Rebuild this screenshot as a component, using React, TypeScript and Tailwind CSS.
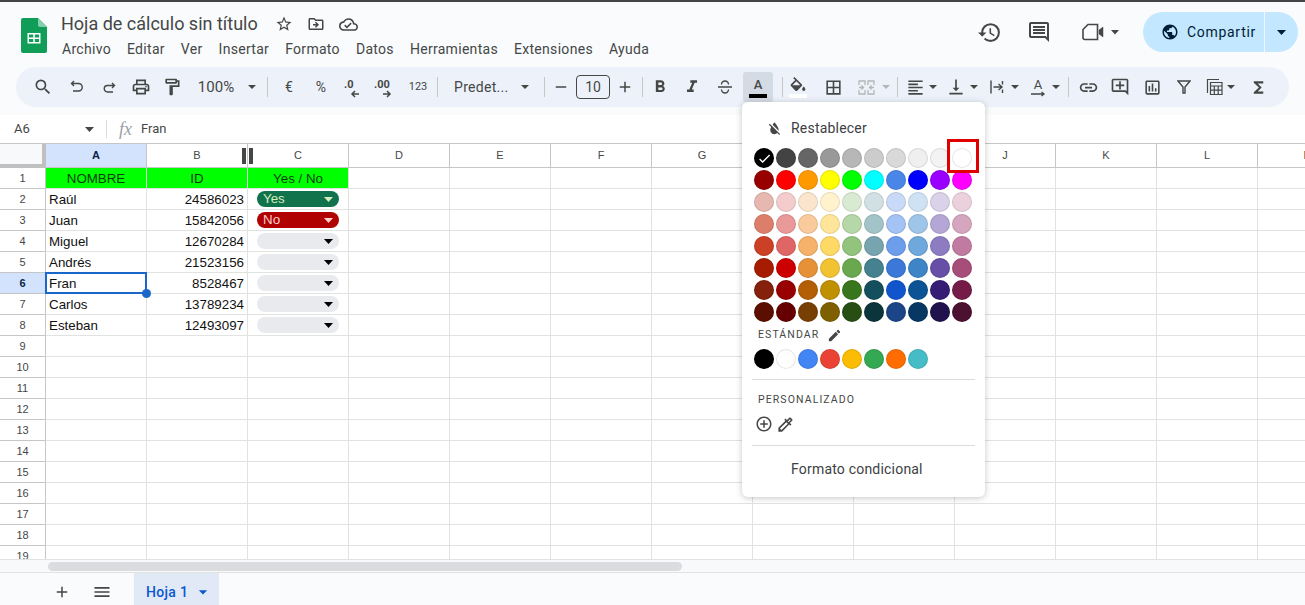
import React from "react";
import {
  MdSearch, MdOutlinePrint, MdOutlineFormatPaint, MdArrowDropDown, MdRemove, MdAdd,
  MdFormatBold, MdFormatItalic, MdBorderAll, MdFormatAlignLeft,
  MdVerticalAlignBottom, MdLink, MdOutlineAddComment, MdOutlineInsertChart, MdFunctions, MdHistory,
  MdOutlineComment, MdPublic, MdStarBorder, MdOutlineDriveFileMove, MdOutlineCloudDone, MdCheck,
  MdFormatColorReset, MdEdit, MdAddCircleOutline, MdOutlineColorize, MdMenu,
} from "react-icons/md";

const palette = [
  ["bg-[#000000]","bg-[#434343]","bg-[#666666]","bg-[#999999]","bg-[#b7b7b7]","bg-[#cccccc]","bg-[#d9d9d9]","bg-[#efefef]","bg-[#f3f3f3]","bg-[#ffffff]"],
  ["bg-[#980000]","bg-[#ff0000]","bg-[#ff9900]","bg-[#ffff00]","bg-[#00ff00]","bg-[#00ffff]","bg-[#4a86e8]","bg-[#0000ff]","bg-[#9900ff]","bg-[#ff00ff]"],
  ["bg-[#e6b8af]","bg-[#f4cccc]","bg-[#fce5cd]","bg-[#fff2cc]","bg-[#d9ead3]","bg-[#d0e0e3]","bg-[#c9daf8]","bg-[#cfe2f3]","bg-[#d9d2e9]","bg-[#ead1dc]"],
  ["bg-[#dd7e6b]","bg-[#ea9999]","bg-[#f9cb9c]","bg-[#ffe599]","bg-[#b6d7a8]","bg-[#a2c4c9]","bg-[#a4c2f4]","bg-[#9fc5e8]","bg-[#b4a7d6]","bg-[#d5a6bd]"],
  ["bg-[#cc4125]","bg-[#e06666]","bg-[#f6b26b]","bg-[#ffd966]","bg-[#93c47d]","bg-[#76a5af]","bg-[#6d9eeb]","bg-[#6fa8dc]","bg-[#8e7cc3]","bg-[#c27ba0]"],
  ["bg-[#a61c00]","bg-[#cc0000]","bg-[#e69138]","bg-[#f1c232]","bg-[#6aa84f]","bg-[#45818e]","bg-[#3c78d8]","bg-[#3d85c6]","bg-[#674ea7]","bg-[#a64d79]"],
  ["bg-[#85200c]","bg-[#990000]","bg-[#b45f06]","bg-[#bf9000]","bg-[#38761d]","bg-[#134f5c]","bg-[#1155cc]","bg-[#0b5394]","bg-[#351c75]","bg-[#741b47]"],
  ["bg-[#5b0f00]","bg-[#660000]","bg-[#783f04]","bg-[#7f6000]","bg-[#274e13]","bg-[#0c343d]","bg-[#1c4587]","bg-[#073763]","bg-[#20124d]","bg-[#4c1130]"],
].flat();

const standard = ["bg-[#000000]","bg-[#ffffff]","bg-[#4285f4]","bg-[#ea4335]","bg-[#fbbc04]","bg-[#34a853]","bg-[#ff6d01]","bg-[#46bdc6]"];

const rows: [string, string, string][] = [
  ["Raúl", "24586023", "Yes"],
  ["Juan", "15842056", "No"],
  ["Miguel", "12670284", ""],
  ["Andrés", "21523156", ""],
  ["Fran", "8528467", ""],
  ["Carlos", "13789234", ""],
  ["Esteban", "12493097", ""],
];

const letters = ["A","B","C","D","E","F","G","H","I","J","K","L","M"];

function Slot({ c, children }: { c: string; children?: React.ReactNode }) {
  return <div className={"flex h-full shrink-0 items-center justify-center " + c}>{children}</div>;
}
function Sep({ c }: { c: string }) {
  return <div className={"h-[20px] w-px shrink-0 bg-[#c7c7c7] " + c} />;
}
function Caret({ c, dim }: { c: string; dim?: boolean }) {
  return (
    <Slot c={"w-[12px] " + c}>
      <svg width="8" height="4" viewBox="0 0 8 4" className={dim ? "fill-[#b4b6b8]" : "fill-[#444746]"}>
        <path d="M0 0h8L4 4z" />
      </svg>
    </Slot>
  );
}

function Cols() {
  return (
    <>
      <div className="border-r-[4px] border-b-[4px] border-[#c0c0c0] bg-[#f8f9fa]" />
      {letters.map((l, i) => (
        <div
          key={l}
          className={
            "flex items-center justify-center border-r border-b border-[#c4c7c5] text-[11px] " +
            (i === 0 ? "bg-[#d3e3fd] font-bold text-[#0b1f47]" : "bg-white text-[#444746]")
          }
        >
          {l}
        </div>
      ))}
    </>
  );
}

function Chip({ v }: { v: string }) {
  const tone =
    v === "Yes" ? "bg-[#11734b] text-[#d4edbc]" : v === "No" ? "bg-[#b10202] text-[#ffcfc9]" : "bg-[#e8eaed] text-[#000000]";
  const caret = v === "" ? "fill-[#000000]" : v === "Yes" ? "fill-[#d4edbc]" : "fill-[#ffcfc9]";
  return (
    <div className={"flex h-[16px] w-[82px] items-center justify-between rounded-full pr-[6px] pl-[6px] text-[13.33px] " + tone}>
      <span>{v}</span>
      <svg width="9" height="5" viewBox="0 0 9 5" className={caret}>
        <path d="M0 0h9L4.500 5z" />
      </svg>
    </div>
  );
}

function Sheet() {
  const line = "border-r border-b border-[#e1e3e1]";
  const cells: React.ReactNode[] = [];
  for (let r = 1; r <= 19; r++) {
    const sel = r === 6;
    cells.push(
      <div
        key={"h" + r}
        className={
          "flex items-center justify-center border-r border-b border-[#c4c7c5] text-[11px] " +
          (sel ? "bg-[#d3e3fd] font-bold text-[#0b1f47]" : "bg-white text-[#444746]")
        }
      >
        {r}
      </div>
    );
    for (let c = 0; c < 13; c++) {
      let content: React.ReactNode = null;
      let extra = "";
      if (r === 1 && c < 3) {
        content = ["NOMBRE", "ID", "Yes / No"][c];
        extra = "bg-[#00ff00] justify-center border-[#00e600] pt-px text-[#0a3d0a]";
      } else if (r >= 2 && r <= 8 && c < 3) {
        const row = rows[r - 2];
        if (c === 0) {
          content = row[0];
          extra = "pt-px pl-[3px]";
        } else if (c === 1) {
          content = row[1];
          extra = "justify-end pt-px pr-[3px]";
        } else {
          content = <Chip v={row[2]} />;
          extra = "justify-center";
        }
      }
      cells.push(
        <div key={r + "-" + c} className={"relative flex items-center whitespace-nowrap " + line + " " + extra}>
          {content}
          {sel && c === 0 && (
            <>
              <div className="absolute -top-px -right-px -bottom-px -left-px border-2 border-[#1a66c9]" />
              <div className="absolute -right-[5px] -bottom-[5px] z-10 h-[9px] w-[9px] rounded-full bg-[#1a66c9]" />
            </>
          )}
        </div>
      );
    }
  }
  return (
    <div className="relative min-h-0 flex-1 overflow-hidden bg-white">
      <div className="grid w-[1359px] grid-cols-[46px_repeat(13,101px)] grid-rows-[24px_repeat(19,21px)] font-['Liberation_Sans',sans-serif] text-[13.33px] text-[#111111]">
        <Cols />
        {cells}
      </div>
      <div className="absolute top-[4px] left-[242px] h-[16px] w-[4px] bg-[#444746]" />
      <div className="absolute top-[4px] left-[249px] h-[16px] w-[4px] bg-[#444746]" />
    </div>
  );
}

function Popover() {
  return (
    <div className="absolute top-[102px] left-[742px] z-20 h-[395px] w-[243px] rounded-[6px] bg-white text-[#3c4043] shadow-[0_1px_6px_rgba(60,64,67,0.3)]">
      <div className="flex h-[46px] items-center pt-[7px] pl-[24px]">
        <MdFormatColorReset className="text-[#444746]" size={17} />
        <span className="ml-[8px] text-[14px] tracking-[0.2px]">Restablecer</span>
      </div>
      <div className="ml-[12px] grid w-[218px] grid-cols-[repeat(10,20px)] gap-[2px]">
        {palette.map((c, i) => (
          <div key={i} className={"flex h-[20px] w-[20px] items-center justify-center rounded-full shadow-[inset_0_0_0_1px_rgba(0,0,0,0.1)] " + c}>
            {i === 0 && <MdCheck className="text-white" size={15} />}
          </div>
        ))}
      </div>
      <div className="mt-[5px] ml-[16px] flex h-[16px] items-center text-[10.500px] font-normal tracking-[1.1px] text-[#444746]">
        ESTÁNDAR
        <MdEdit className="ml-[8px]" size={15} />
      </div>
      <div className="mt-[6px] ml-[12px] flex gap-[2px]">
        {standard.map((c, i) => (
          <div key={i} className={"h-[20px] w-[20px] rounded-full shadow-[inset_0_0_0_1px_rgba(0,0,0,0.1)] " + c} />
        ))}
      </div>
      <div className="mx-[10px] mt-[10px] h-px bg-[#dadce0]" />
      <div className="mt-[13px] ml-[16px] h-[14px] text-[10.500px] leading-[14px] font-normal tracking-[1.1px] text-[#444746]">PERSONALIZADO</div>
      <div className="mt-[6px] ml-[13px] flex h-[22px] items-center gap-[3px] text-[#444746]">
        <MdAddCircleOutline size={18} />
        <MdOutlineColorize size={19} />
      </div>
      <div className="mx-[10px] mt-[10px] h-px bg-[#dadce0]" />
      <div className="mt-[14px] pl-[49px] text-[14px] leading-[18px] tracking-[0.2px]">Formato condicional</div>
      <div className="absolute top-[37px] left-[205px] h-[34px] w-[32px] border-[3px] border-[#e00000]" />
    </div>
  );
}

function Toolbar() {
  return (
    <div className="mx-[16px] flex h-[40px] shrink-0 items-center rounded-full bg-[#edf2fa] text-[#444746]">
      <Slot c="ml-[15px] w-[24px]"><MdSearch size={20} /></Slot>
      <Slot c="ml-[10px] w-[24px]">
        <svg width="14" height="14" viewBox="0 0 14 14" className="fill-none stroke-[#444746] stroke-[1.4]">
          <path d="M4 1L1.500 3.500 4 6M1.500 3.500H8.500a3.700 3.700 0 0 1 0 7.500H3" />
        </svg>
      </Slot>
      <Slot c="ml-[8px] w-[24px]">
        <svg width="14" height="14" viewBox="0 0 14 14" className="fill-none stroke-[#444746] stroke-[1.4]">
          <path d="M10 3L12.500 5.500 10 8M12.500 5.500H5.500a3 3 0 0 0 0 6.500H11" />
        </svg>
      </Slot>
      <Slot c="ml-[8px] w-[24px]"><MdOutlinePrint size={20} /></Slot>
      <Slot c="ml-[7px] w-[24px]"><MdOutlineFormatPaint size={20} /></Slot>
      <Slot c="mt-px ml-[10px] w-[44px] text-[15px]">100%</Slot>
      <Caret c="ml-[8px]" />
      <Sep c="ml-[9px]" />
      <Slot c="ml-[9px] w-[24px] text-[14px]">€</Slot>
      <Slot c="ml-[8px] w-[24px] text-[14px]">%</Slot>
      <Slot c="ml-[7px] w-[24px]">
        <div className="relative h-[20px] w-[24px]">
          <span className="absolute top-[1px] left-[4px] text-[11px] leading-[14px] font-bold">.0</span>
          <svg width="10" height="8" viewBox="0 0 10 8" className="absolute top-[13px] left-[10px] fill-none stroke-[#444746] stroke-[1.5]"><path d="M9 4H2M5 1L2 4l3 3" /></svg>
        </div>
      </Slot>
      <Slot c="ml-[7px] w-[28px]">
        <div className="relative h-[20px] w-[28px]">
          <span className="absolute top-[1px] left-[3px] text-[11px] leading-[14px] font-bold">.00</span>
          <svg width="10" height="8" viewBox="0 0 10 8" className="absolute top-[13px] left-[11px] fill-none stroke-[#444746] stroke-[1.5]"><path d="M1 4h7M5 1l3 3-3 3" /></svg>
        </div>
      </Slot>
      <Slot c="ml-[7px] w-[24px] text-[11px]">123</Slot>
      <Sep c="ml-[7px]" />
      <Slot c="mt-px ml-[16px] w-[58px] justify-start text-[14px] tracking-[0.3px]"><span className="whitespace-nowrap">Predet...</span></Slot>
      <Caret c="ml-[7px]" />
      <Sep c="ml-[13px]" />
      <Slot c="ml-[10px] w-[12px]"><MdRemove size={18} className="shrink-0" /></Slot>
      <Slot c="ml-[9px] w-[34px]">
        <div className="flex h-[24px] w-[34px] items-center justify-center rounded-[4px] border border-[#444746] text-[14px]">10</div>
      </Slot>
      <Slot c="ml-[9px] w-[12px]"><MdAdd size={18} className="shrink-0" /></Slot>
      <Sep c="ml-[11px]" />
      <Slot c="ml-[7px] w-[20px]"><MdFormatBold size={20} /></Slot>
      <Slot c="ml-[12px] w-[20px]"><MdFormatItalic size={20} /></Slot>
      <Slot c="ml-[13px] w-[20px]">
        <svg width="16" height="14" viewBox="0 0 16 14" className="fill-none stroke-[#444746] stroke-[1.4]">
          <path d="M4.500 4.500a3.500 3.500 0 0 1 7 0M1 7h14M11.500 9.500a3.500 3.500 0 0 1-7 0" />
        </svg>
      </Slot>
      <Slot c="ml-[8px] h-[34px] w-[30px]">
        <div className="flex h-[30px] w-[30px] flex-col items-center justify-center rounded-[3px] bg-[#d5dbe4]">
          <span className="h-[15px] text-[13px] leading-[15px] font-medium">A</span>
          <div className="mt-[2px] h-[4px] w-[18px] bg-black" />
        </div>
      </Slot>
      <Sep c="ml-[9px]" />
      <Slot c="ml-[3px] w-[24px]">
        <div className="flex flex-col items-center">
          <svg width="16" height="14" viewBox="3 0 18 17" className="fill-[#444746]">
            <path d="M16.560 8.940L7.620 0 6.210 1.410l2.380 2.380-5.150 5.150c-.59.59-.59 1.540 0 2.120l5.500 5.500c.29.29.68.44 1.060.44s.77-.15 1.060-.44l5.500-5.500c.59-.58.59-1.530 0-2.120zM5.210 10L10 5.210 14.790 10H5.210zM19 11.500s-2 2.170-2 3.500c0 1.100.9 2 2 2s2-.9 2-2c0-1.330-2-3.500-2-3.500z" />
          </svg>
          <div className="mt-[3px] h-[4px] w-[18px] bg-white" />
        </div>
      </Slot>
      <Slot c="ml-[11px] w-[24px]"><MdBorderAll size={19} /></Slot>
      <Slot c="ml-[9px] w-[24px]">
        <svg width="17" height="17" viewBox="0 0 17 17" className="fill-none stroke-[#b4b6b8] stroke-[1.3]">
          <path d="M1 6V2h6v4M1 11v4h6v-4M10 6V2h6v4M10 11v4h6v-4M1 8.500h4M12 8.500h4M3.500 6.500l2 2-2 2M13.500 6.500l-2 2 2 2" />
        </svg>
      </Slot>
      <Caret c="ml-[2px]" dim />
      <Sep c="ml-[5px]" />
      <Slot c="ml-[7px] w-[20px]"><MdFormatAlignLeft size={19} /></Slot>
      <Caret c="ml-[2px]" />
      <Slot c="ml-[7px] w-[20px]"><MdVerticalAlignBottom size={20} /></Slot>
      <Caret c="ml-[2px]" />
      <Slot c="ml-[7px] w-[20px]">
        <svg width="14" height="14" viewBox="0 0 14 14" className="fill-none stroke-[#444746] stroke-[1.4]">
          <path d="M1 0.500v13M12.500 1v3.500M12.500 9.500V13M3.500 7H12M8.500 4l3.500 3-3.500 3" />
        </svg>
      </Slot>
      <Caret c="ml-[2px]" />
      <Slot c="ml-[7px] w-[20px]">
        <div className="flex flex-col items-center">
          <span className="h-[13px] text-[13px] leading-[13px]">A</span>
          <svg width="16" height="6" viewBox="0 0 16 6" className="fill-none stroke-[#444746] stroke-[1.3]"><path d="M1 3h13M11.500 1l2.500 2-2.500 2" /></svg>
        </div>
      </Slot>
      <Caret c="ml-[2px]" />
      <Sep c="ml-[6px]" />
      <Slot c="ml-[7px] w-[24px]"><MdLink size={21} /></Slot>
      <Slot c="ml-[8px] w-[24px]"><MdOutlineAddComment size={20} /></Slot>
      <Slot c="ml-[8px] w-[24px]"><MdOutlineInsertChart size={19} /></Slot>
      <Slot c="ml-[8px] w-[24px]">
        <svg width="14" height="14" viewBox="0 0 14 14" className="fill-none stroke-[#444746] stroke-[1.4]">
          <path d="M1 1h12L8 7v6H6V7z" />
        </svg>
      </Slot>
      <Slot c="ml-[8px] w-[20px]">
        <svg width="17" height="18" viewBox="0 0 17 18" className="fill-none stroke-[#444746] stroke-[1.2]">
          <path d="M13 1.500H1.500V15M4.500 4.500h11.500v12h-11.500zM4.500 8h11.500M4.500 12.200h11.500M8.300 8v8.500M12.200 8v8.500" />
        </svg>
      </Slot>
      <Caret c="ml-[1px]" />
      <Slot c="ml-[11px] w-[20px]"><MdFunctions size={19} /></Slot>
    </div>
  );
}

export default function App() {
  return (
    <div className="relative flex h-[605px] w-full flex-col overflow-hidden bg-[#f9fbfd] font-['Roboto',sans-serif] text-[#444746]">
      <div className="h-[2px] shrink-0 bg-[#444444]" />
      <header className="flex h-[65px] shrink-0 items-start">
        <svg width="26" height="35" viewBox="0 0 26 35" className="mt-[16px] ml-[21px] shrink-0">
          <path d="M2 0h15l9 9v24a2 2 0 0 1-2 2H2a2 2 0 0 1-2-2V2a2 2 0 0 1 2-2z" fill="#0f9d58" />
          <path d="M17 0l9 9h-7a2 2 0 0 1-2-2z" fill="#87ceac" />
          <path d="M6.500 15h13v10.500h-13zM8 16.500v3h4.200v-3zM13.800 16.500v3H18v-3zM8 21v3h4.200v-3zM13.800 21v3H18v-3z" fill="#fff" fillRule="evenodd" />
        </svg>
        <div className="ml-[14px] shrink-0">
          <div className="mt-[11px] flex h-[22px] items-center">
            <span className="text-[18px] leading-[22px] whitespace-nowrap text-[#444746]">Hoja de cálculo sin título</span>
            <MdStarBorder size={18} className="ml-[17px] text-[#444746]" />
            <MdOutlineDriveFileMove size={18} className="ml-[14px] text-[#444746]" />
            <MdOutlineCloudDone size={19} className="ml-[14px] text-[#444746]" />
          </div>
          <nav className="mt-[5px] ml-px flex gap-[16px] text-[14px] leading-[18px] tracking-[0.3px] whitespace-nowrap text-[#444746]">
            <span>Archivo</span><span>Editar</span><span>Ver</span><span>Insertar</span><span>Formato</span><span>Datos</span><span>Herramientas</span><span>Extensiones</span><span>Ayuda</span>
          </nav>
        </div>
        <div className="mt-[10px] ml-auto flex h-[40px] items-center pr-[7px]">
          <MdHistory size={25} className="text-[#444746]" />
          <MdOutlineComment size={24} className="ml-[25px] text-[#444746]" />
          <svg width="22" height="18" viewBox="0 0 22 18" className="ml-[31px] fill-none stroke-[#444746] stroke-[1.6]">
            <path d="M6 1.500h9.500v15H3a2 2 0 0 1-2-2V6.500z" />
            <path d="M17 7l4-3v10l-4-3z" fill="#444746" strokeWidth="0.500" />
          </svg>
          <svg width="10" height="5" viewBox="0 0 10 5" className="ml-[6px] fill-[#444746]"><path d="M1 0h8L5 4.500z" /></svg>
          <div className="ml-[23px] flex h-[40px] w-[155px] items-center rounded-full bg-[#c2e7ff] text-[#001d35]">
            <MdPublic size={18} className="ml-[18px]" />
            <span className="ml-[8px] w-[77px] text-[14px] tracking-[0.7px] whitespace-nowrap">Compartir</span>
            <div className="h-[40px] w-px bg-[#f0f7fc]" />
            <svg width="9" height="5" viewBox="0 0 9 5" className="ml-[12px] fill-[#001d35]"><path d="M0 0h9L4.500 5z" /></svg>
          </div>
        </div>
      </header>
      <Toolbar />
      <div className="mt-[8px] flex h-[29px] shrink-0 items-center border-b border-[#c4c7c5] bg-white text-[13px] text-[#444746]">
        <span className="ml-[14px] w-[71px]">A6</span>
        <svg width="9" height="5" viewBox="0 0 9 5" className="fill-[#444746]"><path d="M0 0h9L4.500 5z" /></svg>
        <div className="ml-[12px] h-[18px] w-px bg-[#dadce0]" />
        <span className="ml-[12px] w-[22px] font-['Liberation_Serif',serif] text-[18px] leading-[20px] text-[#9aa0a6] italic">fx</span>
        <span>Fran</span>
      </div>
      <Sheet />
      <div className="flex h-[13px] shrink-0 items-center border-t border-[#e1e3e1] bg-[#f8f9fa] pl-[48px]">
        <div className="h-[9px] w-[634px] rounded-full bg-[#dadce0]" />
      </div>
      <div className="flex h-[33px] shrink-0 items-center border-t border-[#e1e3e1] bg-[#f9fbfd]">
        <MdAdd size={18} className="mt-[5px] ml-[53px] text-[#444746]" />
        <MdMenu size={20} className="mt-[5px] ml-[21px] text-[#444746]" />
        <div className="ml-[22px] flex h-full w-[85px] items-center bg-[#e1e9f7] pt-[6px] pl-[12px] text-[14px] font-medium tracking-[0.3px] text-[#0b57d0]">
          Hoja 1
          <MdArrowDropDown size={20} className="ml-[5px]" />
        </div>
      </div>
      <Popover />
    </div>
  );
}
